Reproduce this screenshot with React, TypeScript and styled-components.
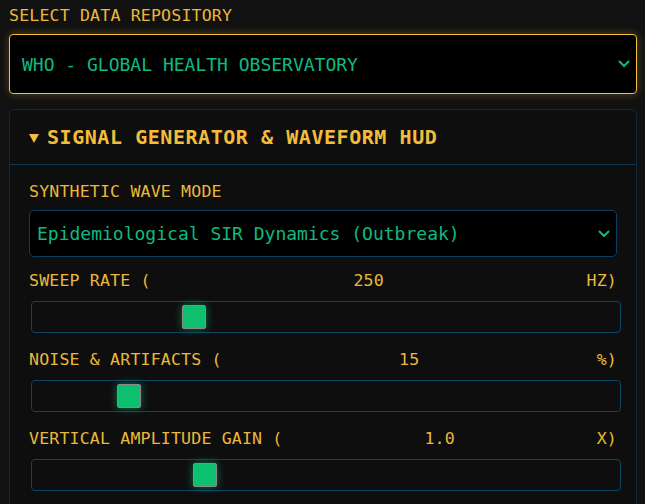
import React from 'react';
import styled, { createGlobalStyle } from 'styled-components';

interface TSlider {
  label: string;
  value: string;
  unit: string;
  pos: number; // 0..1 position of the thumb
}

const sliders: TSlider[] = [
  { label: 'SWEEP RATE (', value: '250', unit: 'HZ)', pos: 0.266 },
  { label: 'NOISE & ARTIFACTS (', value: '15', unit: '%)', pos: 0.15 },
  { label: 'VERTICAL AMPLITUDE GAIN (', value: '1.0', unit: 'X)', pos: 0.285 }
];

const Chevron = () => (
  <svg width="12" height="8" viewBox="0 0 12 8" fill="none">
    <path d="M1.5 1.5 L6 6 L10.5 1.5" stroke="#10b981" strokeWidth="2" strokeLinecap="round" strokeLinejoin="round" />
  </svg>
);

const App = () => {
  return (
    <>
      <GlobalStyle />
      <SPage>
        <SFieldLabel>SELECT DATA REPOSITORY</SFieldLabel>
        <SRepoSelect>
          <span>WHO - GLOBAL HEALTH OBSERVATORY</span>
          <Chevron />
        </SRepoSelect>

        <SPanel>
          <SPanelHeader>
            <STriangle />
            SIGNAL GENERATOR &amp; WAVEFORM HUD
          </SPanelHeader>
          <SPanelBody>
            <SFieldLabel>SYNTHETIC WAVE MODE</SFieldLabel>
            <SModeSelect>
              <span>Epidemiological SIR Dynamics (Outbreak)</span>
              <Chevron />
            </SModeSelect>

            {sliders.map((s) => (
              <SSliderGroup key={s.label}>
                <SSliderLabel>
                  <span>{s.label}</span>
                  <span>{s.value}</span>
                  <span>{s.unit}</span>
                </SSliderLabel>
                <STrack>
                  <SThumb style={{ left: `calc(12px + (100% - 24px) * ${s.pos})` }} />
                </STrack>
              </SSliderGroup>
            ))}
          </SPanelBody>
        </SPanel>
      </SPage>
    </>
  );
};

export default App;

const GlobalStyle = createGlobalStyle`
  html, body {
    margin: 0;
    background: #111111;
  }
  body {
    font-family: "DejaVu Sans Mono", "Liberation Mono", monospace;
    overflow: hidden;
  }
`;

const SPage = styled.div`
  padding: 6px 8px 0 9px;
  min-height: 100vh;
  box-sizing: border-box;
  background: #111111;
`;

const SFieldLabel = styled.div`
  color: #eab83a;
  font-size: 16.6px;
  letter-spacing: 0.15px;
  line-height: 20px;
  margin-bottom: 8px;
`;

const SRepoSelect = styled.div`
  display: flex;
  align-items: center;
  justify-content: space-between;
  height: 60px;
  box-sizing: border-box;
  padding: 0 6px 0 12px;
  background: #000;
  border: 1px solid #f2bd3a;
  border-radius: 4px;
  box-shadow: 0 0 10px rgba(242, 189, 58, 0.3);
  color: #10b981;
  font-size: 18px;
`;

const SPanel = styled.div`
  margin-top: 15px;
  background: #0e0e0e;
  border: 1px solid #0f2a3d;
  border-radius: 6px;
`;

const SPanelHeader = styled.div`
  display: flex;
  align-items: center;
  height: 54px;
  padding: 0 19px;
  border-bottom: 1px solid #0e3550;
  color: #f2bd3a;
  font-size: 20px;
  font-weight: bold;
  letter-spacing: 0.55px;
`;

const STriangle = styled.span`
  width: 0;
  height: 0;
  border-left: 5px solid transparent;
  border-right: 5px solid transparent;
  border-top: 9px solid #f2bd3a;
  margin: 2px 8px 0 0;
`;

const SPanelBody = styled.div`
  padding: 17px 19px 20px;
`;

const SModeSelect = styled.div`
  display: flex;
  align-items: center;
  justify-content: space-between;
  height: 47px;
  box-sizing: border-box;
  padding: 0 6px 0 7px;
  background: #000;
  border: 1px solid #0c3d5e;
  border-radius: 5px;
  color: #10b981;
  font-size: 18px;
`;

const SSliderGroup = styled.div`
  margin-top: 14px;

  & + & {
    margin-top: 17px;
  }
`;

const SSliderLabel = styled.div`
  display: flex;
  justify-content: space-between;
  color: #eab83a;
  font-size: 16.6px;
  letter-spacing: 0.15px;
  line-height: 20px;
  margin-bottom: 10px;
`;

const STrack = styled.div`
  position: relative;
  height: 32px;
  box-sizing: border-box;
  margin: 0 -4px 0 2px;
  border: 1px solid #0c4466;
  border-radius: 4px;
  background: #0e0e0e;
`;

const SThumb = styled.div`
  position: absolute;
  top: 50%;
  width: 24px;
  height: 24px;
  box-sizing: border-box;
  transform: translate(-50%, -50%);
  background: #0cc06e;
  border: 1px solid #8a8a8a;
  border-radius: 2px;
  box-shadow: 0 0 9px rgba(16, 185, 129, 0.55);
`;
